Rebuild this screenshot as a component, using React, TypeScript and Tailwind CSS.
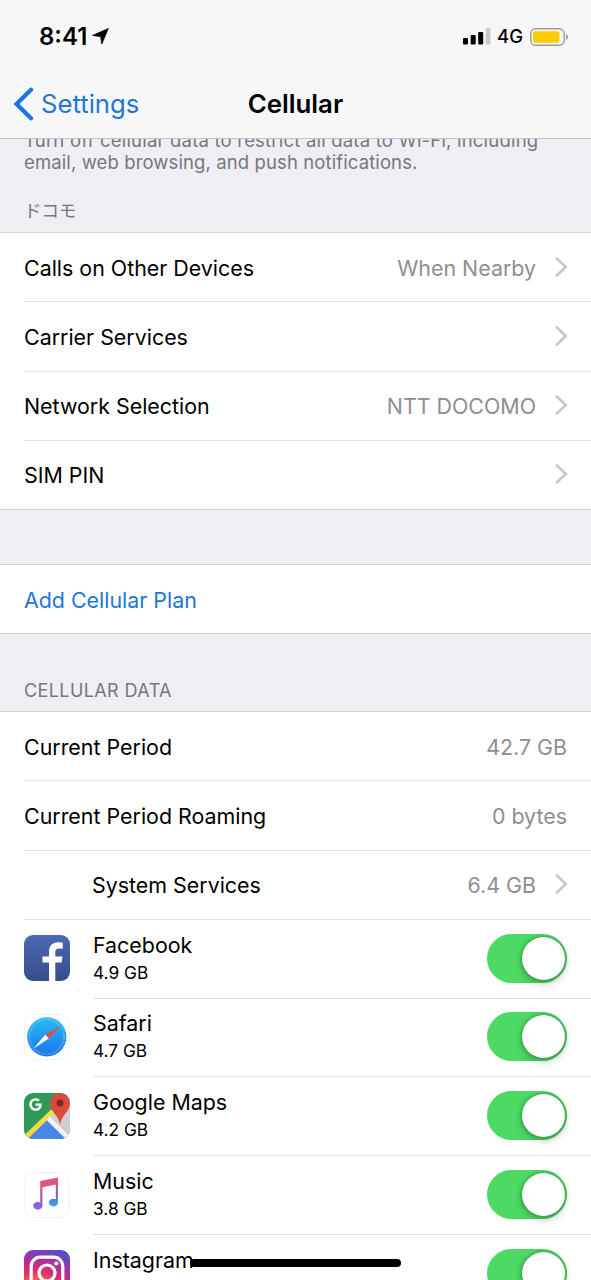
import type { ReactNode } from "react";
import { FaGoogle } from "react-icons/fa";

function Chevron() {
  return (
    <svg width="14" height="22" viewBox="0 0 14 22" className="-mt-[2px] -mr-px ml-[18px]" fill="none">
      <path d="M2 1.8 L11.8 11 L2 20.2" stroke="#c7c7cc" strokeWidth="2.6" />
    </svg>
  );
}

function StatusBar() {
  return (
    <div className="flex h-[72px] items-center pt-px pr-[22px] pl-[39px]">
      <span className="text-[24px] font-semibold text-black">8:41</span>
      <svg width="17" height="17" viewBox="0 0 17 17" className="ml-[5px] -mt-px">
        <path d="M16.3 0.6 L9.8 16 L8.6 8.6 L0.6 7.4 Z" fill="#000" stroke="#000" strokeWidth="0.8" strokeLinejoin="round" />
      </svg>

      <div className="ml-auto flex items-center">
        <svg width="28" height="17" viewBox="0 0 28 17">
          <rect x="0" y="10" width="5" height="6.5" rx="1" />
          <rect x="7.7" y="7" width="5" height="9.5" rx="1" />
          <rect x="15.2" y="4" width="5" height="12.5" rx="1" />
          <rect x="22.8" y="0" width="4.6" height="16.5" rx="1" fill="#c9c9c9" />
        </svg>
        <span className="ml-[6px] text-[18.5px] font-medium text-black">4G</span>
        <svg width="39" height="18" viewBox="0 0 39 18" className="ml-[7px]">
          <rect x="0.8" y="0.8" width="33.4" height="16.4" rx="4.6" fill="none" stroke="#9b9b9b" strokeWidth="1.4" />
          <rect x="3" y="3.2" width="26.5" height="11.6" rx="2.4" fill="#fdcb05" />
          <path d="M36 6 C38.6 6.8 38.6 11.2 36 12 Z" fill="#9b9b9b" />
        </svg>
      </div>
    </div>
  );
}

function NavBar() {
  return (
    <div className="grid h-16 grid-cols-[1fr_auto_1fr] items-center">
      <div className="flex items-center pl-[13px] text-[#2377d2]">
        <svg width="22" height="34" viewBox="0 0 22 34" fill="none">
          <path d="M18 2.8 L3.5 17 L18 31.2" stroke="#1a76e3" strokeWidth="4.2" strokeLinecap="round" />
        </svg>
        <span className="ml-[6px] text-[25.7px]">Settings</span>
      </div>
      <h1 className="text-[25.8px] font-semibold text-black">Cellular</h1>
      <div />
    </div>
  );
}

interface RowProps {
  label: string;
  value?: string;
  chevron?: boolean;
  indent?: boolean;
  last?: boolean;
}

function Row({ label, value, chevron, indent, last }: RowProps) {
  return (
    <div className={last ? "h-[69.25px]" : "h-[69.25px] pl-6"}>
      <div
        className={
          last
            ? "flex h-full items-center border-b border-[#d3d3d7] pt-px pr-6 pl-6"
            : "flex h-full items-center border-b border-[#e0e0e2] pt-px pr-6"
        }
      >
        <span className={indent ? "pl-[68px] text-black" : "text-black"}>{label}</span>
        <span className="ml-auto text-[#8e8e93]">{value}</span>
        {chevron && <Chevron />}
      </div>
    </div>
  );
}

function FacebookIcon() {
  return (
    <svg width="46" height="46" viewBox="0 0 46 46">
      <defs>
        <linearGradient id="fb" x1="0" y1="0" x2="0" y2="1">
          <stop offset="0" stopColor="#4c69b4" />
          <stop offset="1" stopColor="#354f8c" />
        </linearGradient>
      </defs>
      <rect width="46" height="46" rx="9" fill="url(#fb)" />
      <path
        d="M25 46 V27.5 H18.5 V21.5 H25 V17 C25 10.7 28.5 7.3 34.2 7.3 C36.2 7.3 37.8 7.5 38.7 7.7 V13.4 H35.2 C32.3 13.4 31.3 14.8 31.3 17.2 V21.5 H38.5 L37.6 27.5 H31.3 V46 Z"
        fill="#fff"
      />
    </svg>
  );
}

function SafariIcon() {
  return (
    <svg width="46" height="46" viewBox="0 0 46 46">
      <defs>
        <linearGradient id="sf" x1="0" y1="0" x2="0" y2="1">
          <stop offset="0" stopColor="#27bdf3" />
          <stop offset="1" stopColor="#1c74ec" />
        </linearGradient>
      </defs>
      <rect x="0.5" y="0.5" width="45" height="45" rx="10" fill="#fff" stroke="#f1f1f1" />
      <circle cx="22.8" cy="22.8" r="19.6" fill="url(#sf)" />
      <circle cx="22.8" cy="22.8" r="17.4" fill="none" stroke="#fff" strokeOpacity="0.45" strokeWidth="2.2" strokeDasharray="0.7 1.6" />
      <path d="M36.5 11.7 L24.8 24.6 L21.2 20.8 Z" fill="#e8484a" />
      <path d="M9.6 34.4 L21.2 20.8 L24.8 24.6 Z" fill="#fff" />
    </svg>
  );
}

function MapsIcon() {
  return (
    <svg width="46" height="46" viewBox="0 0 46 46">
      <clipPath id="maps-clip">
        <rect width="46" height="46" rx="9" />
      </clipPath>
      <g clipPath="url(#maps-clip)">
        <rect width="46" height="46" fill="#2f9a57" />
        <path d="M23 24 L46 0 V46 Z" fill="#cfcfcf" />
        <path d="M23.5 26 L3 46 H44 Z" fill="#4a86e8" />
        <path d="M-1 47 L29 18" stroke="#f7d944" strokeWidth="5" />
        <path d="M24 25 L45 46" stroke="#f2f2f2" strokeWidth="4.6" />
        <path d="M36 32 C35 22 26 19 26 10 A10 10 0 0 1 46 10 C46 19 37 22 36 32 Z" fill="#dc4a3d" />
        <circle cx="36" cy="10" r="3.5" fill="#7c2b24" />
      </g>
      <FaGoogle x="5" y="5" size={13} color="#fff" />
    </svg>
  );
}

function MusicIcon() {
  return (
    <svg width="46" height="46" viewBox="0 0 46 46">
      <defs>
        <linearGradient id="mu-l" gradientUnits="userSpaceOnUse" x1="0" y1="6" x2="0" y2="37">
          <stop offset="0.2" stopColor="#e2557a" />
          <stop offset="0.6" stopColor="#a859b5" />
          <stop offset="1" stopColor="#8164f0" />
        </linearGradient>
        <linearGradient id="mu-r" gradientUnits="userSpaceOnUse" x1="0" y1="6" x2="0" y2="34">
          <stop offset="0.1" stopColor="#dc5573" />
          <stop offset="0.5" stopColor="#945f9f" />
          <stop offset="0.9" stopColor="#3f9ce8" />
        </linearGradient>
      </defs>
      <rect x="0.5" y="0.5" width="45" height="45" rx="10" fill="#fff" stroke="#f1f1f1" />
      <ellipse cx="13.8" cy="33.8" rx="4.6" ry="3.9" fill="url(#mu-l)" />
      <ellipse cx="29.4" cy="30.6" rx="4.6" ry="3.9" fill="url(#mu-r)" />
      <path d="M16.2 9.8 Q16.2 9 17 8.8 L32 6 V12.6 L18.4 15.2 V34 H16.2 Z" fill="url(#mu-l)" />
      <path d="M31.8 6 L34 5.6 V31 H31.8 Z" fill="url(#mu-r)" />
    </svg>
  );
}

function InstagramIcon() {
  return (
    <svg width="46" height="46" viewBox="0 0 46 46">
      <defs>
        <radialGradient id="ig" cx="0.28" cy="1.05" r="1.1">
          <stop offset="0" stopColor="#fdd269" />
          <stop offset="0.3" stopColor="#f6713c" />
          <stop offset="0.55" stopColor="#dd2f6e" />
          <stop offset="0.8" stopColor="#a82f9f" />
          <stop offset="1" stopColor="#5850c4" />
        </radialGradient>
      </defs>
      <rect width="46" height="46" rx="9" fill="url(#ig)" />
      <g fill="none" stroke="#fff" strokeWidth="3.2">
        <rect x="7.2" y="7.2" width="31.6" height="31.6" rx="9" />
        <circle cx="23" cy="23" r="8" />
      </g>
      <circle cx="32.3" cy="13.6" r="2" fill="#fff" />
    </svg>
  );
}

function Toggle() {
  return (
    <div className="mb-px ml-auto flex h-[49px] w-20 items-center justify-end rounded-full bg-[#4cd964] pr-[2.5px]">
      <div className="size-[43px] rounded-full bg-white shadow-[0_4px_8px_rgba(0,0,0,0.2),0_0_4px_rgba(0,0,0,0.35)]" />
    </div>
  );
}

function AppRow({ icon, name, usage }: { icon: ReactNode; name: string; usage?: string }) {
  return (
    <div className="flex h-[78.8px] pl-[23.5px]">
      <div className="flex w-[69.5px] shrink-0 items-center pb-[2px]">{icon}</div>
      <div className="flex grow items-center border-b border-[#e0e0e2] pr-6">
        <div className="text-black">
          <div className="leading-[27px]">{name}</div>
          <div className="h-[27px] text-[17.3px] leading-[27px]">{usage}</div>
        </div>
        <Toggle />
      </div>
    </div>
  );
}

const apps = [
  { name: "Facebook", usage: "4.9 GB", icon: <FacebookIcon /> },
  { name: "Safari", usage: "4.7 GB", icon: <SafariIcon /> },
  { name: "Google Maps", usage: "4.2 GB", icon: <MapsIcon /> },
  { name: "Music", usage: "3.8 GB", icon: <MusicIcon /> },
  { name: "Instagram", icon: <InstagramIcon /> },
];

export default function App() {
  return (
    <div className="relative flex h-[1280px] w-[591px] flex-col overflow-hidden bg-[#efeef3] font-['Inter','Noto_Sans_CJK_JP',sans-serif] text-[21.4px] whitespace-nowrap">
      <header className="h-[139px] shrink-0 border-b border-[#c4c4c7] bg-[#f7f7f7]">
        <StatusBar />
        <NavBar />
      </header>

      <main className="min-h-0 grow overflow-hidden">
        <div className="flow-root h-[93px] text-[18.5px] text-[#77777c]">
          <p className="-mt-[10px] pl-6 leading-[22px]">
            <span className="tracking-[0.2px]">Turn off cellular data to restrict all data to Wi-Fi, including</span>
            <br />
            <span className="tracking-[0.11px]">email, web browsing, and push notifications.</span>
          </p>
          <h2 className="mt-[27px] pl-6 text-[17.5px] leading-[22px]">ドコモ</h2>
        </div>

        <section className="border-t border-[#d3d3d7] bg-white">
          <Row label="Calls on Other Devices" value="When Nearby" chevron />
          <Row label="Carrier Services" chevron />
          <Row label="Network Selection" value="NTT DOCOMO" chevron />
          <Row label="SIM PIN" chevron last />
        </section>

        <section className="mt-[54px] flex h-[70px] items-center border-y border-[#d3d3d7] bg-white pt-[2px] pl-6 text-[#2377d2]">
          Add Cellular Plan
        </section>

        <h2 className="h-[77px] pt-[46px] pl-6 text-[18px] leading-[22px] tracking-[0.4px] text-[#77777c]">CELLULAR DATA</h2>

        <section className="border-t border-[#d3d3d7] bg-white">
          <Row label="Current Period" value="42.7 GB" />
          <Row label="Current Period Roaming" value="0 bytes" />
          <Row label="System Services" value="6.4 GB" chevron indent />
          {apps.map((app) => (
            <AppRow key={app.name} {...app} />
          ))}
        </section>
      </main>

      <div className="absolute bottom-[13px] left-[190px] h-2 w-[211px] rounded-full bg-black" />
    </div>
  );
}
